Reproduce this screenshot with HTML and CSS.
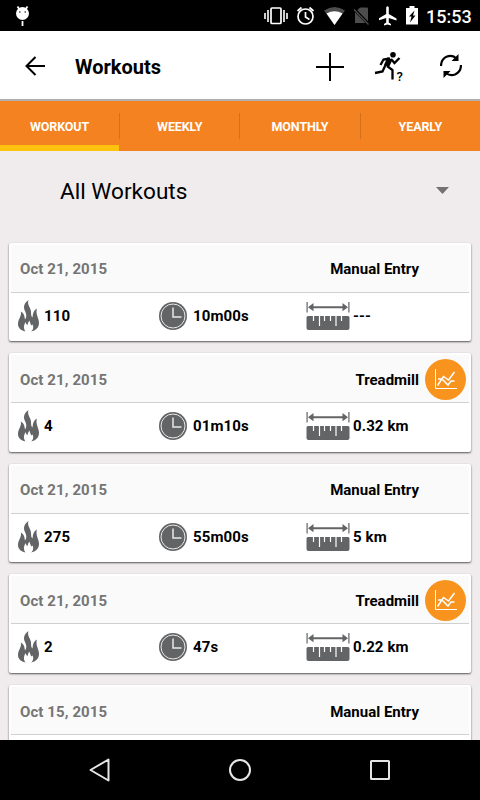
FILE: index.html
```
<!DOCTYPE html>
<html lang="en">
<head>
    <meta charset="UTF-8">
    <title>Workouts</title>
    <link rel="stylesheet" href="styles.css">
</head>
<body>

    <svg class="sprite">
        <symbol id="flame" viewBox="0 0 21 32">
            <path d="M10.500 0C6 3 5 7 7 11c1.500 3 2 6 0 8.500C6.500 16 6 13 2.800 11.500 4 16 0 19 0 24c0 4 3 6.500 7.500 7.500C5 28 6 25 7.500 22c.5 1.500 1 2.500 2 3 .5-1.500.5-3 2-4.500 0 2 1.500 3 1.500 5l1.500-1c1.500 3 .5 5.500-1.500 7 5-1 8-4 8-8.500 0-5-3.500-8-2.200-14.500-3 2-4 4.500-4.300 9-2-2-1-4-1.800-7.500C12 7 9 4.500 10.500 0z"/>
        </symbol>
        <symbol id="clock" viewBox="0 0 28 28">
            <circle cx="14" cy="14" r="14"/>
            <circle cx="14" cy="14" r="12" fill="none" stroke="#e8e8e8" stroke-width="1"/>
            <path d="M14 5.500V15h8.500" fill="none" stroke="#e8e8e8" stroke-width="1.500"/>
        </symbol>
        <symbol id="ruler" viewBox="0 0 44 28">
            <path d="M.5 0h1.200v10.500H.5zM42.300 0h1.200v10.500h-1.200zM2 5.200L7.500 1v3.300h29V1L42 5.200l-5.500 4.100V6.200h-29v3.100z"/>
            <path d="M2 14h40q1.500 0 1.500 1.500V26q0 2-2 2h-39q-2 0-2-2V15.500Q.5 14 2 14z"/>
            <path d="M7.500 13.500V19M13.500 13.500V24M18.500 13.500V19M24.500 13.500V19M30 13.500V24M35.500 13.500V19" fill="none" stroke="#fff" stroke-width="1.200"/>
        </symbol>
        <symbol id="chart" viewBox="0 0 41 41">
            <circle cx="20.500" cy="20.500" r="20.500" fill="#f8941d"/>
            <path d="M10.500 10v19.500h21.500" fill="none" stroke="#fff" stroke-width="1"/>
            <path d="M12.500 26.500l6-9 5 3.500 6-8M13 20h4l6 6 3-4h3.500" fill="none" stroke="#fff" stroke-width="1.500"/>
        </symbol>
    </svg>

    <div class="status-bar">
        <svg class="bug" width="16" height="31" viewBox="15 0 16 31" fill="#fff">
            <circle cx="22.500" cy="13.500" r="6.500"/>
            <path d="M17.500 6.500l2 3M27.500 6.500l-2 3M22.500 21v5" stroke="#fff" stroke-width="1.800"/>
            <path d="M19 12h1.500M24.500 12H26" stroke="#000" stroke-width="1.200"/>
        </svg>
        <svg width="24" height="31" viewBox="264 0 24 31" fill="none" stroke="#fff" stroke-width="1.700">
            <rect x="271" y="8" width="10" height="15.500" rx="1"/>
            <path d="M268 10v12M284 10v12M265 13v6M287 13v6" stroke-width="1.600"/>
        </svg>
        <svg width="20" height="31" viewBox="295 0 20 31" fill="none" stroke="#fff" stroke-width="1.700">
            <circle cx="304.500" cy="16.500" r="7.500"/>
            <path d="M304.500 12v5l4 2.500M296.500 11l4-3.500M312.500 11l-4-3.500"/>
        </svg>
        <svg width="22" height="31" viewBox="322 0 22 31">
            <path d="M322 10.500q10.500-7 21 0L332.500 25z" fill="#4d4d4d"/>
            <path d="M324.500 13.500q8-4.500 16 0l-8 11.500z" fill="#fff"/>
        </svg>
        <svg width="17" height="31" viewBox="352 0 17 31">
            <path d="M358 7.500h7q1 0 1 1V23H353V12.500z" fill="#4d4d4d"/>
            <path d="M352 9l15.500 16" stroke="#000" stroke-width="3"/>
            <path d="M351.500 9l15 15.500" stroke="#4d4d4d" stroke-width="1.300"/>
        </svg>
        <svg width="19" height="31" viewBox="377 0 19 31">
            <path d="M384.200 7.500q1.300-2.500 2.600 0V14l7.700 4.500v2l-7.700-2.500v4.500l2.200 1.500V25.500l-3.500-1-3.500 1V24l2.200-1.500V18l-7.700 2.500v-2l7.700-4.500z" fill="#fff"/>
        </svg>
        <svg width="12" height="31" viewBox="405 0 12 31">
            <path d="M408.500 6h5v2h3q.5 0 .5.500V24q0 .5-.5.500h-11q-.5 0-.5-.5V8.500q0-.5.500-.5h3z" fill="#fff"/>
            <path d="M413.500 10.500l-5.500 6h2.500l-1.500 6 5.500-7h-2.500z"/>
        </svg>
        <span class="time">15:53</span>
    </div>

    <div class="header">
        <svg class="back" width="21" height="22" viewBox="0 0 21 22" fill="none" stroke="#000" stroke-width="2">
            <path d="M20 11H2M10.500 2L1.500 11l9 9"/>
        </svg>
        <h1>Workouts</h1>
        <svg class="add" width="28" height="30" viewBox="0 0 28 30" stroke="#000" stroke-width="2">
            <path d="M14 1v28M0 15h28"/>
        </svg>
        <svg class="run" width="30" height="32" viewBox="374 51 30 32">
            <circle cx="393" cy="54.800" r="2.800"/>
            <path d="M390 58.500L386.500 66" fill="none" stroke="#000" stroke-width="5.500"/>
            <path d="M390 58.500l-6.500 1-3 5.500M391 59l3.500 4 5-5M385.500 65l-3 6.500-7.500 1.500M387 66l5.500 4v9.500" fill="none" stroke="#000" stroke-width="2.300"/>
            <text class="question" x="396.500" y="81">?</text>
        </svg>
        <svg class="sync" width="22" height="26" viewBox="440 53 22 26">
            <path d="M441 66q0-7 6-9.500 5-1.800 9 1.500M461 65q0 7-6 9.500-5 1.800-9-1.500" fill="none" stroke="#000" stroke-width="2.200"/>
            <path d="M458.500 54v7h-7zM443.500 78v-7h7z"/>
        </svg>
    </div>

    <div class="tabs">
        <div class="tab active">WORKOUT</div>
        <div class="tab">WEEKLY</div>
        <div class="tab">MONTHLY</div>
        <div class="tab">YEARLY</div>
    </div>

    <div class="content">
        <div class="spinner">
            <span>All Workouts</span>
            <svg width="13" height="7" viewBox="0 0 13 7"><path d="M0 0h13L6.500 7z" fill="#737172"/></svg>
        </div>

        <div class="card">
            <div class="card-head">
                <span class="date">Oct 21, 2015</span>
                <span class="type">Manual Entry</span>
            </div>
            <div class="card-body">
                <div class="stat calories"><svg><use href="#flame"/></svg>110</div>
                <div class="stat duration"><svg><use href="#clock"/></svg>10m00s</div>
                <div class="stat distance"><svg><use href="#ruler"/></svg>---</div>
            </div>
        </div>

        <div class="card">
            <div class="card-head">
                <span class="date">Oct 21, 2015</span>
                <span class="type">Treadmill</span>
                <svg class="chart"><use href="#chart"/></svg>
            </div>
            <div class="card-body">
                <div class="stat calories"><svg><use href="#flame"/></svg>4</div>
                <div class="stat duration"><svg><use href="#clock"/></svg>01m10s</div>
                <div class="stat distance"><svg><use href="#ruler"/></svg>0.32 km</div>
            </div>
        </div>

        <div class="card">
            <div class="card-head">
                <span class="date">Oct 21, 2015</span>
                <span class="type">Manual Entry</span>
            </div>
            <div class="card-body">
                <div class="stat calories"><svg><use href="#flame"/></svg>275</div>
                <div class="stat duration"><svg><use href="#clock"/></svg>55m00s</div>
                <div class="stat distance"><svg><use href="#ruler"/></svg>5 km</div>
            </div>
        </div>

        <div class="card">
            <div class="card-head">
                <span class="date">Oct 21, 2015</span>
                <span class="type">Treadmill</span>
                <svg class="chart"><use href="#chart"/></svg>
            </div>
            <div class="card-body">
                <div class="stat calories"><svg><use href="#flame"/></svg>2</div>
                <div class="stat duration"><svg><use href="#clock"/></svg>47s</div>
                <div class="stat distance"><svg><use href="#ruler"/></svg>0.22 km</div>
            </div>
        </div>

        <div class="card">
            <div class="card-head">
                <span class="date">Oct 15, 2015</span>
                <span class="type">Manual Entry</span>
            </div>
            <div class="card-body"></div>
        </div>
    </div>

    <div class="nav-bar">
        <svg width="24" height="26" viewBox="0 0 24 26"><path d="M20.500 2.500v21L2.500 13z"/></svg>
        <svg width="24" height="26" viewBox="0 0 24 26"><circle cx="12" cy="13" r="10"/></svg>
        <svg width="24" height="26" viewBox="0 0 24 26"><rect x="3" y="4" width="18" height="18" rx=".5"/></svg>
    </div>

</body>
</html>
```
FILE: styles.css
```
* {
    box-sizing: border-box;
}
body {
    margin: 0;
    width: 480px;
    height: 800px;
    overflow: hidden;
    display: flex;
    flex-direction: column;
    font-family: Roboto, sans-serif;
    color: #000;
    background-color: #f0ecee;
}
svg {
    display: block;
    flex-shrink: 0;
}
.sprite {
    display: none;
}
.status-bar {
    height: 31px;
    flex-shrink: 0;
    display: flex;
    align-items: center;
    gap: 8px;
    padding: 0 9px 0 15px;
    background-color: #000;
}
.bug {
    margin-right: auto;
}
.time {
    width: 45px;
    color: #fff;
    font-size: 18px;
    font-weight: 500;
    line-height: 31px;
    padding-top: 2px;
    white-space: nowrap;
}
.header {
    height: 70px;
    flex-shrink: 0;
    display: flex;
    align-items: center;
    padding: 2px 18px 0 25px;
    background-color: #fff;
    border-bottom: 2px solid #b0b0b0;
}
.header h1 {
    margin: 2px auto 0 29px;
    font-size: 20px;
    font-weight: 700;
}
.add {
    margin: 2px 30px 0 0;
}
.run {
    margin: 2px 36px 0 0;
}
.question {
    font-family: Roboto, sans-serif;
    font-size: 13px;
    font-weight: 500;
}
.tabs {
    height: 50px;
    flex-shrink: 0;
    display: flex;
    align-items: center;
    background-color: #f58220;
}
.tab {
    flex: 1;
    height: 26px;
    line-height: 28px;
    text-align: center;
    color: #fff;
    font-size: 12.5px;
    font-weight: 700;
    letter-spacing: -0.1px;
    border-left: 1px solid #d2701d;
}
.tab.active {
    flex: 0 0 119px;
    height: 50px;
    line-height: 52px;
    border-left: none;
    border-bottom: 6px solid #ffc20e;
}
.content {
    flex: 1;
    min-height: 0;
    overflow: hidden;
    padding: 0 9px;
}
.spinner {
    height: 91.5px;
    display: flex;
    align-items: center;
    justify-content: space-between;
    padding: 0 22px 10px 51px;
    font-size: 22.6px;
}
.spinner svg {
    margin-top: -2px;
}
.card {
    height: 98.67px;
    margin-bottom: 12px;
    padding: 2px;
    background-color: #fff;
    border-radius: 2px;
    box-shadow: 0 1px 2px rgba(0, 0, 0, 0.65);
}
.card-head {
    height: 48px;
    display: flex;
    align-items: center;
    padding: 2px 3px 0 9px;
    background-color: #fafafa;
    border-bottom: 1px solid #d0d0d0;
    font-size: 15px;
    font-weight: 700;
}
.date {
    color: #757575;
    letter-spacing: 0.1px;
}
.type {
    margin-left: auto;
    margin-right: 47px;
}
.chart {
    width: 41px;
    height: 41px;
    margin: -1px 0 0 -41px;
}
.card-body {
    display: flex;
    padding: 8px 0 0 7px;
    font-size: 15px;
    font-weight: 700;
    letter-spacing: 0.1px;
}
.stat {
    display: flex;
    align-items: center;
    height: 30px;
}
.stat svg {
    fill: #636466;
}
.calories {
    width: 141px;
}
.calories svg {
    width: 21px;
    height: 32px;
    margin-right: 5px;
}
.duration {
    width: 147px;
}
.duration svg {
    width: 28px;
    height: 28px;
    margin-right: 6px;
}
.distance svg {
    width: 44px;
    height: 28px;
    margin-right: 3px;
}
.nav-bar {
    height: 60px;
    flex-shrink: 0;
    display: flex;
    align-items: center;
    justify-content: center;
    gap: 116px;
    background-color: #000;
}
.nav-bar svg {
    fill: none;
    stroke: #e6e6e6;
    stroke-width: 2;
    stroke-linejoin: round;
}
```
